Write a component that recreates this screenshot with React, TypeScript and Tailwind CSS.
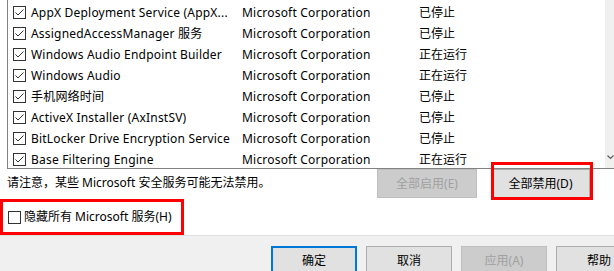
import React from 'react';

const services: [string, string][] = [
  ['AppX Deployment Service (AppX...', '已停止'],
  ['AssignedAccessManager 服务', '已停止'],
  ['Windows Audio Endpoint Builder', '正在运行'],
  ['Windows Audio', '正在运行'],
  ['手机网络时间', '已停止'],
  ['ActiveX Installer (AxInstSV)', '已停止'],
  ['BitLocker Drive Encryption Service', '已停止'],
  ['Base Filtering Engine', '正在运行'],
];

function CheckBox({ checked }: { checked: boolean }) {
  return (
    <svg width="13" height="13" viewBox="0 0 13 13" className="shrink-0">
      <rect x="0.5" y="0.5" width="12" height="12" fill="#fff" stroke="#333" />
      {checked && (
        <polyline points="2.5,6.5 5,9 10.5,3.5" fill="none" stroke="#333" strokeWidth="1" />
      )}
    </svg>
  );
}

export default function App() {
  return (
    <div className="relative w-[614px] h-[271px] overflow-hidden bg-white flex flex-col text-[12px] text-black font-['Noto_Sans','Noto_Sans_CJK_SC',sans-serif]">
      {/* service list */}
      <div className="ml-[7px] h-[169px] shrink-0 flex border-l border-b border-[#828282]">
        <div className="flex-1 pt-[2px] overflow-hidden">
          {services.map(([name, status]) => (
            <div key={name} className="h-[21px] flex items-center pl-[5px] whitespace-nowrap">
              <CheckBox checked />
              <span className="ml-[5px] w-[211px] tracking-[0.2px]">{name}</span>
              <span className="w-[177px] tracking-[0.2px]">Microsoft Corporation</span>
              <span>{status}</span>
            </div>
          ))}
        </div>
        <div className="w-[9px] bg-[#f0f0f0] flex flex-col justify-end pb-[8px] pl-[2px]">
          <svg width="7" height="5" viewBox="0 0 7 5">
            <polyline points="0.5,0.5 3.5,3.5 6.5,0.5" fill="none" stroke="#606060" strokeWidth="1.2" />
          </svg>
        </div>
      </div>

      {/* note + enable/disable */}
      <div className="h-[30px] shrink-0 flex items-start">
        <div className="flex-1 h-[27px] flex items-center pl-[7px]">
          请注意，某些 Microsoft 安全服务可能无法禁用。
        </div>
        <div className="flex gap-[14px] pr-[24px]">
          <button className="w-[100px] h-[29px] bg-[#cccccc] border border-[#bfbfbf] text-[#a0a0a0]">
            全部启用(E)
          </button>
          <button className="w-[99px] h-[29px] bg-[#e1e1e1] border border-[#adadad]">
            全部禁用(D)
          </button>
        </div>
      </div>

      {/* hide microsoft services */}
      <div className="w-[184px] h-[36px] shrink-0 border-[3px] border-[#ff0000] flex items-center pl-[5px] gap-[3px]">
        <CheckBox checked={false} />
        <span>隐藏所有 Microsoft 服务(H)</span>
      </div>

      {/* dialog footer */}
      <div className="flex-1 bg-[#f0f0f0] border-t border-[#dfdfdf] pt-[10px] pl-[271px] flex gap-[9px] items-start">
        <button className="w-[86px] h-[29px] shrink-0 bg-[#e1e1e1] border-2 border-[#0078d7]">确定</button>
        <button className="w-[86px] h-[29px] shrink-0 bg-[#e1e1e1] border border-[#adadad]">取消</button>
        <button className="w-[86px] h-[29px] shrink-0 bg-[#cccccc] border border-[#bfbfbf] text-[#a0a0a0]">应用(A)</button>
        <button className="w-[86px] h-[29px] shrink-0 bg-[#e1e1e1] border border-[#adadad]">帮助</button>
      </div>

      {/* annotation around disable-all */}
      <div className="absolute left-[491px] top-[162px] w-[102px] h-[38px] border-[3px] border-[#ff0000]" />
    </div>
  );
}
